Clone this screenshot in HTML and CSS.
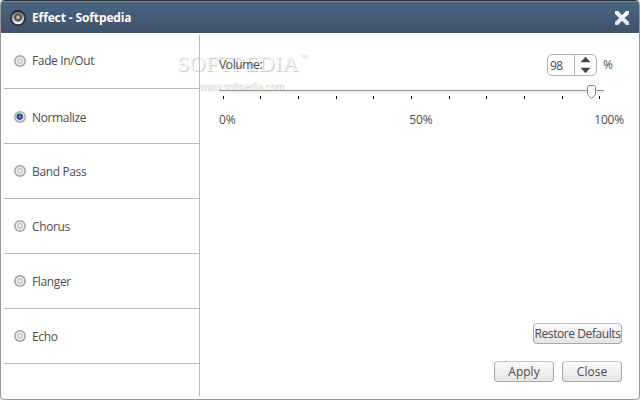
FILE: index.html
```html
<!DOCTYPE html>
<html lang="en">
<head>
<meta charset="utf-8">
<title>Effect - Softpedia</title>
<link rel="stylesheet" href="styles.css">
</head>
<body>
<div class="window">
  <header class="titlebar">
    <svg class="speaker" width="16" height="16" viewBox="0 0 16 16">
      <defs>
        <radialGradient id="cone" cx=".5" cy=".5" r=".5">
          <stop offset="0" stop-color="#ddd"/><stop offset=".3" stop-color="#aaa"/><stop offset=".55" stop-color="#4a4a4a"/><stop offset=".8" stop-color="#666"/><stop offset="1" stop-color="#999"/>
        </radialGradient>
        <linearGradient id="rim" x2="0" y2="1"><stop offset="0" stop-color="#666"/><stop offset="1" stop-color="#fff"/></linearGradient>
      </defs>
      <circle cx="8" cy="8" r="7.9" fill="#252525"/>
      <circle cx="8" cy="8" r="6.3" fill="url(#rim)"/>
      <circle cx="8" cy="7.3" r="4.6" fill="url(#cone)"/>
    </svg>
    <h1 class="title">Effect - Softpedia</h1>
    <svg class="close" width="16" height="16" viewBox="0 0 16 16">
      <defs><linearGradient id="x" x2="0" y2="1"><stop offset="0" stop-color="#fff"/><stop offset="1" stop-color="#d5e0f0"/></linearGradient></defs>
      <path d="M1 1H4L8 5.2 12 1H15V4L10.7 8 15 12V15H12L8 10.8 4 15H1V12L5.3 8 1 4Z" fill="url(#x)"/>
    </svg>
  </header>
  <div class="body">
    <nav class="effects">
      <div class="effect"><i class="radio"></i><span>Fade In/Out</span></div>
      <div class="effect chosen"><i class="radio on"></i><span>Normalize</span></div>
      <div class="effect"><i class="radio"></i><span>Band Pass</span></div>
      <div class="effect"><i class="radio"></i><span>Chorus</span></div>
      <div class="effect"><i class="radio"></i><span>Flanger</span></div>
      <div class="effect"><i class="radio"></i><span>Echo</span></div>
    </nav>
    <main class="panel">
      <div class="volume">
        <span class="label">Volume:</span>
        <div class="spinner">
          <span class="value">98</span>
          <svg class="arrows" width="21" height="20" viewBox="0 0 21 20"><path d="M6 7L10.500 2 15 7ZM6 13L10.500 18 15 13Z" fill="#444" stroke="#444" stroke-width=".5"/></svg>
        </div>
        <span class="unit">%</span>
      </div>
      <svg class="slider" width="386" height="16" viewBox="0 0 386 16">
        <path d="M0 5.500H385" stroke="#96968f"/>
        <path d="M0 7H385" stroke="#f0f0e8" stroke-width="2"/>
        <path d="M4.500 11v3M41.500 11v3M79.500 11v3M117.500 11v3M154.500 11v3M192.500 11v3M230.500 11v3M267.500 11v3M305.500 11v3M343.500 11v3M380.500 11v3" stroke="#000"/>
        <path d="M368.500 2.500Q368.500 .5 369.500 .5H375.500Q376.500 .5 376.500 2.500V9.500L372.500 13.500 368.500 9.500Z" fill="#fff" stroke="#888"/>
      </svg>
      <div class="scale"><span>0%</span><span class="half">50%</span><span>100%</span></div>
      <div class="actions">
        <button class="button wide">Restore Defaults</button>
        <div class="pair"><button class="button">Apply</button><button class="button">Close</button></div>
      </div>
    </main>
  </div>
  <div class="watermark"><span class="brand">SOFTPEDIA</span><span class="tm">™</span><span class="site">www.softpedia.com</span></div>
</div>
</body>
</html>
```
FILE: styles.css
```css
* { box-sizing: border-box; }
body { margin: 0; background: #ddd; font: 12px/16px "Open Sans", "Noto Sans", sans-serif; color: #4c4c4c; }
.window { position: relative; z-index: 0; width: 640px; height: 400px; background: #fff; border: 1px solid #999; border-top-color: #333; border-radius: 5px; overflow: hidden; }
.titlebar { display: flex; align-items: center; height: 32px; padding: 0 9px; border-top: 1px solid #6587ac; border-left: 1px solid #557397; border-right: 1px solid #557397; background: linear-gradient(#4a6484, #415269); margin: 0 -1px; }
.title { margin: 0 auto 0 6px; font-size: 12px; line-height: 16px; font-weight: 700; color: #fff; letter-spacing: -.12px; }
.body { display: flex; height: 366px; padding: 2px 0 3px 3px; }
.effects { flex: none; width: 196px; border-right: 1px solid #b9b9c3; letter-spacing: -.36px; }
.effect { display: flex; align-items: center; gap: 7px; height: 55px; padding-left: 10px; border-bottom: 1px solid #b9b9c3; }
.effect span { padding-top: 1px; }
.effect:first-child { height: 54px; padding-bottom: 2px; }
.chosen { padding-top: 2px; }
.radio { width: 12px; height: 12px; margin-right: -1px; border-radius: 50%; background: radial-gradient(circle, #eee 0 1.2px, #c4c4c4 2px 2.6px, #f4f4f4 3.3px 3.8px, #aaa 4.7px 5.5px); }
.radio.on { background: radial-gradient(circle at 47% 47%, #5d9ff0 0 .5px, #2560b8 1.5px, #173f80 2.7px, transparent 3.5px), radial-gradient(circle, #d8d8d8 0 4.2px, #aaa 5px); }
.panel { flex: 1; min-width: 0; display: flex; flex-direction: column; padding: 18px 17px 14px 19px; }
.volume { display: flex; align-items: center; height: 23px; }
.label { width: 328px; flex: none; letter-spacing: -.35px; padding-top: 1px; }
.spinner { display: flex; flex: none; width: 50px; height: 22px; border: 1px solid #b0b0b8; border-radius: 5px; }
.value { flex: none; width: 27px; padding: 3px 0 0 2px; border-right: 1px solid #b0b0b8; letter-spacing: -.6px; }
.arrows { flex: none; margin-top: .5px; }
.unit { margin-left: 6px; padding-top: 1px; }
.slider { display: block; margin-top: 9px; flex: none; }
.scale { display: flex; justify-content: space-between; width: 405px; margin-top: 11px; letter-spacing: -.2px; }
.half { margin-left: 12px; }
.actions { margin-top: auto; display: flex; flex-direction: column; align-items: flex-end; gap: 17px; }
.pair { display: flex; gap: 8px; }
.button { width: 60px; height: 21px; padding: 0; border: 1px solid #aaa; border-top-color: #c4c4c4; border-radius: 4px; background: linear-gradient(#fafafa, #e4e4e4); font: inherit; color: #4c4c4c; line-height: 19px; white-space: nowrap; }
.wide { width: 89px; letter-spacing: -.42px; }
.watermark { position: absolute; z-index: -1; left: 175px; top: 51px; width: 135px; height: 44px; color: #f6f6f6; text-shadow: 1px 1px 1px rgba(0,0,0,.25); }
.brand, .tm, .site { position: absolute; white-space: nowrap; }
.brand { left: 1px; top: 0; font: 22px/24px "Liberation Serif", serif; letter-spacing: .35px; }
.tm { left: 124px; top: -3px; font-size: 9px; }
.site { left: 23px; top: 27px; font: 10px/16px "Liberation Sans", sans-serif; letter-spacing: -.1px; }
```
